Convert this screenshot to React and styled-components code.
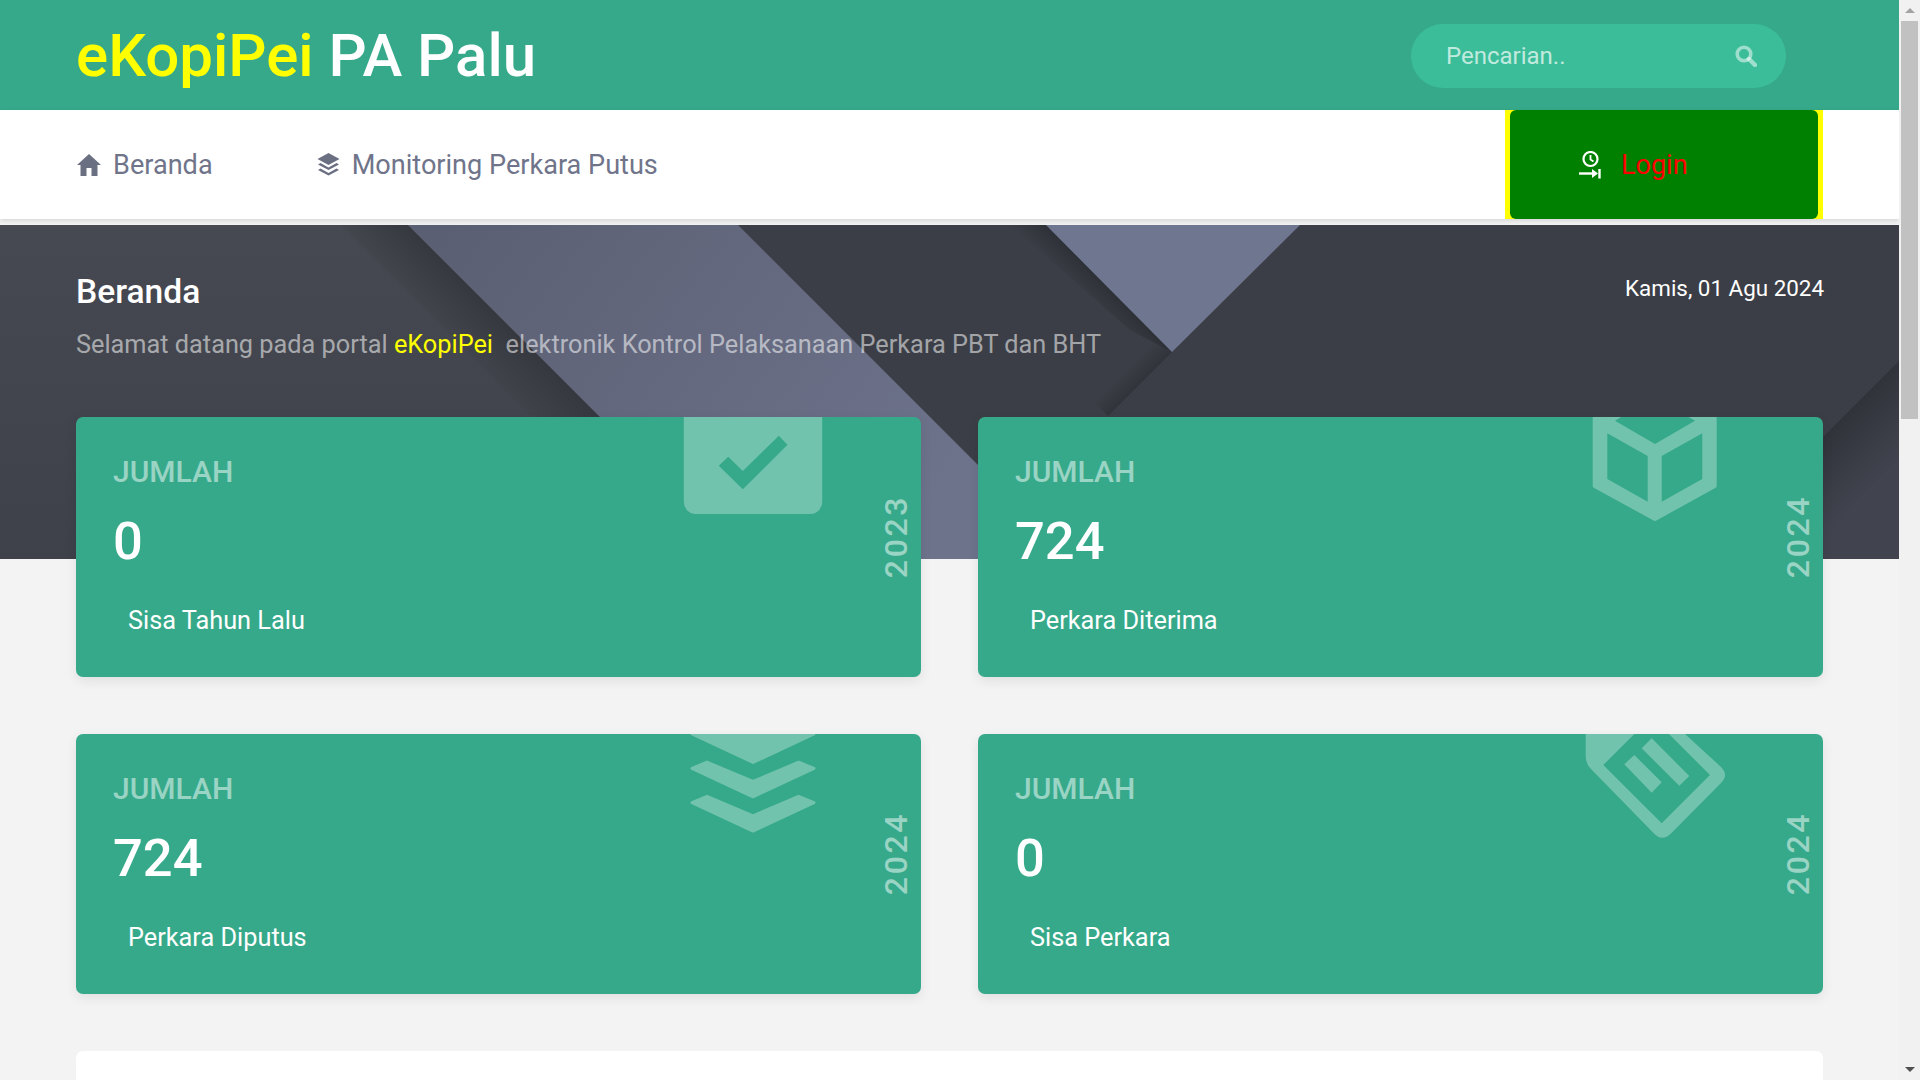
import styled, { createGlobalStyle } from 'styled-components';

const GlobalStyle = createGlobalStyle`
  html, body {
    margin: 0;
    padding: 0;
    height: 100%;
    overflow: hidden;
    background: #f3f3f3;
    font-family: Roboto, "Liberation Sans", sans-serif;
  }
`;

const Shell = styled.div`
  display: flex;
  height: 100vh;
`;

const Page = styled.div`
  flex: 1;
  min-width: 0;
  overflow: hidden;
  background: #f3f3f3;
`;

const ScrollTrack = styled.div`
  width: 21px;
  flex: none;
  background: #f1f1f1;
  display: flex;
  flex-direction: column;
  align-items: center;
`;

const ScrollArrow = styled.div`
  height: 21px;
  flex: none;
  display: flex;
  align-items: center;
  justify-content: center;
  &::before {
    content: '';
    border-left: 5px solid transparent;
    border-right: 5px solid transparent;
    ${(p) => (p.$down ? 'border-top: 5px solid #505050;' : 'border-bottom: 5px solid #a3a3a3;')}
  }
`;

const ScrollThumb = styled.div`
  width: 17px;
  height: 398px;
  background: #c1c1c1;
`;

const ScrollSpace = styled.div`
  flex: 1;
`;

const Header = styled.header`
  height: 110px;
  background: #36a98a;
  display: flex;
  align-items: center;
  justify-content: space-between;
  padding: 0 113px 0 76px;
`;

const Brand = styled.div`
  font-size: 60px;
  font-weight: 500;
  color: #fff;
  white-space: nowrap;
`;

const BrandMark = styled.span`
  color: #ff0;
`;

const Search = styled.div`
  width: 375px;
  height: 64px;
  margin-top: 2px;
  border-radius: 32px;
  background: #3bbd99;
  display: flex;
  align-items: center;
  justify-content: space-between;
  padding: 0 29px 0 35px;
  box-sizing: border-box;
  font-size: 24px;
  color: rgba(255, 255, 255, 0.7);
`;

const Nav = styled.nav`
  height: 109px;
  margin-bottom: 6px;
  background: #fff;
  box-shadow: 0 2px 5px rgba(0, 0, 0, 0.12);
  display: flex;
  align-items: stretch;
  justify-content: space-between;
  padding: 0 76px;
  position: relative;
`;

const NavLinks = styled.div`
  display: flex;
  align-items: center;
  gap: 104px;
  padding-left: 1px;
`;

const NavLink = styled.a`
  display: flex;
  align-items: center;
  gap: 12px;
  font-size: 27.1px;
  color: #70748a;
`;

const LoginWrap = styled.div`
  width: 318px;
  padding: 0 5px;
  box-sizing: border-box;
  background: #ff0;
  display: flex;
`;

const LoginButton = styled.a`
  flex: 1;
  background: green;
  border-radius: 6px;
  display: flex;
  align-items: center;
  gap: 20px;
  padding-left: 69px;
  font-size: 27px;
  color: red;
`;

const Hero = styled.section`
  position: relative;
  height: 334px;
  box-sizing: border-box;
  padding: 45px 75px 0 76px;
  display: flex;
  justify-content: space-between;
  align-items: flex-start;
  overflow: hidden;
  background: #3b3e46;
`;

const HeroArt = styled.svg`
  position: absolute;
  inset: 0;
  width: 100%;
  height: 100%;
`;

const HeroText = styled.div`
  position: relative;
`;

const HeroTitle = styled.h1`
  margin: 0;
  font-size: 33.6px;
  font-weight: 500;
  line-height: 44px;
  color: #fff;
`;

const HeroSub = styled.p`
  margin: 15px 0 0;
  font-size: 25.3px;
  line-height: 32px;
  color: rgba(255, 255, 255, 0.55);
  white-space: pre;
`;

const HeroMark = styled.span`
  color: #ff0;
`;

const HeroDate = styled.div`
  position: relative;
  font-size: 22.4px;
  line-height: 36px;
  color: #fff;
`;

const Content = styled.main`
  position: relative;
  margin-top: -142px;
  padding: 0 76px;
`;

const StatGrid = styled.div`
  display: grid;
  grid-template-columns: 845px 845px;
  justify-content: space-between;
  row-gap: 57px;
`;

const StatCard = styled.div`
  position: relative;
  height: 260px;
  box-sizing: border-box;
  padding: 35px 37px 0;
  background: #36a98a;
  border-radius: 7px;
  box-shadow: 0 4px 12px rgba(0, 0, 0, 0.08);
  overflow: hidden;
  color: #fff;
`;

const StatKicker = styled.div`
  font-size: 30px;
  font-weight: 500;
  line-height: 40px;
  color: rgba(255, 255, 255, 0.5);
`;

const StatValue = styled.div`
  margin-top: 14px;
  font-size: 52.5px;
  font-weight: 500;
  line-height: 70px;
`;

const StatLabel = styled.div`
  margin-top: 27px;
  padding-left: 15px;
  font-size: 25.3px;
  font-weight: 400;
  line-height: 36px;
`;

const StatYear = styled.div`
  position: absolute;
  right: 9px;
  top: 78px;
  writing-mode: vertical-rl;
  transform: rotate(180deg);
  font-size: 32px;
  font-weight: 500;
  letter-spacing: 2.6px;
  line-height: 32px;
  color: rgba(255, 255, 255, 0.5);
`;

const StatIcon = styled.svg`
  position: absolute;
  right: ${(p) => p.$right}px;
  top: ${(p) => p.$top}px;
  width: 150px;
  height: 150px;
`;

const LowerPanel = styled.div`
  margin-top: 57px;
  height: 200px;
  background: #fff;
  border-radius: 7px;
`;

const TINT = '#72c3ad';
const CARD = '#36a98a';

const HomeGlyph = () => (
  <svg width="24" height="22" viewBox="0 0 24 22">
    <path fill="#6b6f82" d="M12 0 L24 11 H20.5 V22 H14.5 V14 H9.5 V22 H3.5 V11 H0 Z" />
  </svg>
);

const LayersGlyph = () => (
  <svg width="23" height="23" viewBox="0 0 22 23">
    <path fill="#6b6f82" d="M11 0 L22 6 L11 12 L0 6 Z" />
    <path fill="#6b6f82" d="M0.5 11.5 L3 10 L11 14.5 L19 10 L21.5 11.5 L11 17 Z" />
    <path fill="#6b6f82" d="M0.5 17 L3 15.5 L11 20 L19 15.5 L21.5 17 L11 22.5 Z" />
  </svg>
);

const LoginGlyph = () => (
  <svg width="22" height="28" viewBox="0 0 22 28">
    <circle cx="11.5" cy="8" r="7" fill="none" stroke="#fff" strokeWidth="2.2" />
    <path d="M11.5 4 V8.5 L14.5 10.5" fill="none" stroke="#fff" strokeWidth="1.8" />
    <path d="M0 22.5 H16" stroke="#fff" strokeWidth="2.4" />
    <path d="M13 18 L19 22.5 L13 27 Z" fill="#fff" />
    <path d="M20.5 18 V27.5" stroke="#fff" strokeWidth="2.4" />
  </svg>
);

const SearchGlyph = () => (
  <svg width="22" height="22" viewBox="0 0 22 22" fill="none" stroke="rgba(255,255,255,0.5)">
    <circle cx="9" cy="9" r="6.8" strokeWidth="3.6" />
    <path d="M14 14 L20 20" strokeWidth="4.4" strokeLinecap="round" />
  </svg>
);

const CheckIcon = () => (
  <StatIcon $right={93.5} $top={-40} viewBox="0 0 150 150">
    <rect x="5.8" y="-2" width="138.4" height="139" rx="12" fill={TINT} />
    <path fill={CARD} d="M40.8 88.7 L50.2 79.7 L64.8 94 L100.8 58.7 L109.5 67.7 L64.8 112.3 Z" />
  </StatIcon>
);

const BoxIcon = () => (
  <StatIcon $right={93} $top={-40} viewBox="0 0 150 150">
    <path
      fill={TINT}
      stroke={TINT}
      strokeWidth="4"
      strokeLinejoin="round"
      d="M75 6 L134.7 40 V109 L75 142 L14.7 109 V40 Z"
    />
    <path fill={CARD} d="M27.3 56.3 L67.7 79 V124.7 L27.3 102 Z" />
    <path fill={CARD} d="M81.7 79 L122.3 56.3 V102 L81.7 124.7 Z" />
    <path fill={CARD} d="M35 43.7 L75 67 L115 43.7 L75 20.3 Z" />
  </StatIcon>
);

const LayersIcon = () => (
  <StatIcon $right={93.5} $top={-40} viewBox="0 0 150 150">
    <g fill={TINT} stroke={TINT} strokeWidth="3" strokeLinejoin="round">
      <path d="M14 40 L75 10 L136 40 L75 68.5 Z" />
      <path d="M14 74.3 L29 68.2 L75 87.5 L120.6 68.2 L136 74.3 L75 102.8 Z" />
      <path d="M14 108.6 L29 102.5 L75 121.8 L120.6 102.5 L136 108.6 L75 137.1 Z" />
    </g>
  </StatIcon>
);

const TagIcon = () => (
  <StatIcon $right={93} $top={-40} viewBox="0 0 150 150">
    <path
      fill={TINT}
      d="M5.7 10 V62 Q5.7 70 11 75 L74 139.5 Q82 148 91 139.5 L141 89 Q149 81 141 73 L68 6 Z"
    />
    <path fill={CARD} d="M23.3 71 L81.7 129.3 L130 81 L71.7 22.7 Z" />
    <path fill={TINT} d="M61.7 54.3 L71.7 44.3 L109.3 82 L99.3 91.7 Z" />
    <path fill={TINT} d="M44.3 70.3 L54.3 61 L81.7 88.3 L71.7 98.7 Z" />
  </StatIcon>
);

// the background picture of the hero, coordinates are hero pixels
const HeroBackground = () => (
  <HeroArt viewBox="0 0 1899 334" preserveAspectRatio="none">
    <defs>
      <linearGradient id="leftFill" x1="0" y1="0" x2="0" y2="1">
        <stop offset="0" stopColor="#464951" />
        <stop offset="1" stopColor="#3e4149" />
      </linearGradient>
      <linearGradient id="leftShade" gradientUnits="userSpaceOnUse" x1="408" y1="0" x2="368" y2="40">
        <stop offset="0" stopColor="#36383f" stopOpacity="1" />
        <stop offset="1" stopColor="#36383f" stopOpacity="0" />
      </linearGradient>
      <linearGradient id="band" gradientUnits="userSpaceOnUse" x1="450" y1="0" x2="900" y2="334">
        <stop offset="0" stopColor="#5b5f73" />
        <stop offset="1" stopColor="#6d738b" />
      </linearGradient>
      <linearGradient id="triShade" gradientUnits="userSpaceOnUse" x1="1046" y1="0" x2="1028" y2="18">
        <stop offset="0" stopColor="#2d2f36" stopOpacity="0.9" />
        <stop offset="1" stopColor="#2d2f36" stopOpacity="0" />
      </linearGradient>
      <linearGradient id="apexShade" gradientUnits="userSpaceOnUse" x1="1172" y1="127" x2="1158" y2="113">
        <stop offset="0" stopColor="#2d2f36" stopOpacity="0.7" />
        <stop offset="1" stopColor="#2d2f36" stopOpacity="0" />
      </linearGradient>
      <linearGradient id="corner" gradientUnits="userSpaceOnUse" x1="1899" y1="136" x2="1949" y2="186">
        <stop offset="0" stopColor="#31333b" />
        <stop offset="1" stopColor="#41444e" />
      </linearGradient>
    </defs>
    <polygon points="0,0 408,0 742,334 0,334" fill="url(#leftFill)" />
    <polygon points="340,0 408,0 742,334 674,334" fill="url(#leftShade)" />
    <polygon points="408,0 738,0 1072,334 742,334" fill="url(#band)" />
    <polygon points="1010,0 1046,0 1172,127 1130,105" fill="url(#triShade)" />
    <polygon points="1172,127 1108,191 1086,169 1150,105" fill="url(#apexShade)" />
    <polygon points="1046,0 1300,0 1172,127" fill="#6f7790" />
    <polygon points="1899,136 1899,334 1701,334" fill="url(#corner)" />
  </HeroArt>
);

const stats = [
  { value: '0', label: 'Sisa Tahun Lalu', year: '2023', icon: <CheckIcon /> },
  { value: '724', label: 'Perkara Diterima', year: '2024', icon: <BoxIcon /> },
  { value: '724', label: 'Perkara Diputus', year: '2024', icon: <LayersIcon /> },
  { value: '0', label: 'Sisa Perkara', year: '2024', icon: <TagIcon /> },
];

function App() {
  return (
    <Shell>
      <GlobalStyle />
      <Page>
        <Header>
          <Brand>
            <BrandMark>eKopiPei</BrandMark> PA Palu
          </Brand>
          <Search>
            <span>Pencarian..</span>
            <SearchGlyph />
          </Search>
        </Header>
        <Nav>
          <NavLinks>
            <NavLink>
              <HomeGlyph />
              Beranda
            </NavLink>
            <NavLink>
              <LayersGlyph />
              Monitoring Perkara Putus
            </NavLink>
          </NavLinks>
          <LoginWrap>
            <LoginButton>
              <LoginGlyph />
              Login
            </LoginButton>
          </LoginWrap>
        </Nav>
        <Hero>
          <HeroBackground />
          <HeroText>
            <HeroTitle>Beranda</HeroTitle>
            <HeroSub>
              Selamat datang pada portal <HeroMark>eKopiPei</HeroMark>{'  '}elektronik Kontrol Pelaksanaan Perkara PBT dan BHT
            </HeroSub>
          </HeroText>
          <HeroDate>Kamis, 01 Agu 2024</HeroDate>
        </Hero>
        <Content>
          <StatGrid>
            {stats.map((s) => (
              <StatCard key={s.label}>
                {s.icon}
                <StatKicker>JUMLAH</StatKicker>
                <StatValue>{s.value}</StatValue>
                <StatLabel>{s.label}</StatLabel>
                <StatYear>{s.year}</StatYear>
              </StatCard>
            ))}
          </StatGrid>
          <LowerPanel />
        </Content>
      </Page>
      <ScrollTrack>
        <ScrollArrow />
        <ScrollThumb />
        <ScrollSpace />
        <ScrollArrow $down />
      </ScrollTrack>
    </Shell>
  );
}

export default App;
